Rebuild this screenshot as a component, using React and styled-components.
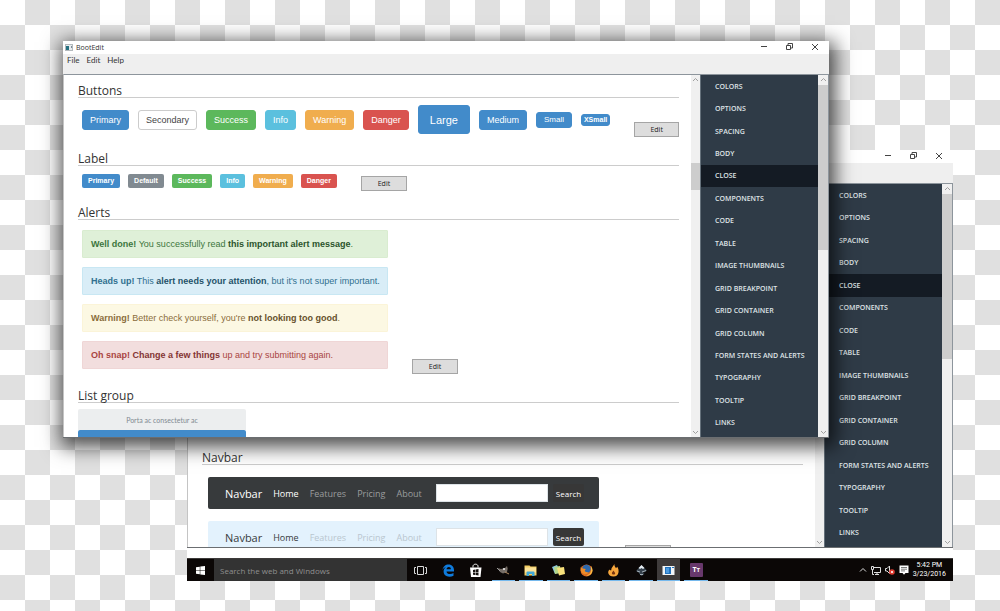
import styled, { createGlobalStyle } from 'styled-components'


const GlobalStyle = createGlobalStyle`
    *{
        box-sizing:border-box;
    }
    body{
        margin:0;
        font-family:"Open Sans", "Noto Sans", sans-serif;
        color:#333333;
    }
    button, input{
        font-family:inherit;
        margin:0;
    }
    a{
        text-decoration:none;
    }
`

const Desktop = styled.div`
    position:relative;
    min-height:100vh;
    padding:150px 47px 30px 187px;
    background:repeating-conic-gradient(#e0e0e0 0 25%, #ffffff 0 50%) 0 0 / 50px 50px;
`

const Screen = styled.div`
    display:flex;
    flex-direction:column;
    gap:10px;
    background-color:#ffffff;
`

const FrontPlace = styled.div`
    position:absolute;
    top:41px;
    left:63px;
    right:171px;
    box-shadow:2px 5px 18px 4px rgba(0,0,0,0.7);
`

const WindowFrame = styled.section`
    display:flex;
    flex-direction:column;
    height:${props => props.$tall ? "398px" : "397px"};
    background-color:#ffffff;
    border-bottom:1px solid #6b6e71;
`

const TitleBar = styled.header`
    display:flex;
    justify-content:space-between;
    align-items:center;
    height:13px;
    padding:0 9px 2px 2px;
`

const TitleName = styled.div`
    display:flex;
    align-items:center;
    gap:3px;
    padding-top:2px;
    font-size:7px;
    line-height:12px;
`

const TitleControls = styled.div`
    display:flex;
    gap:15px;
`

const TitleButton = styled.button`
    display:flex;
    padding:0;
    border:none;
    background:none;
    color:#444444;
`

const MenuBar = styled.div`
    display:flex;
    align-items:flex-start;
    gap:7px;
    height:20px;
    padding:0 4px;
    background-color:#efefef;
`

const MenuButton = styled.button`
    padding:0;
    border:none;
    background:none;
    color:#333333;
    font-family:Lato, sans-serif;
    font-size:8px;
    line-height:13px;
`

const WindowBody = styled.div`
    display:flex;
    flex:1;
    min-height:0;
    border:1px solid #8d959c;
    border-width:1px 1px 0 1px;
    border-left-color:#c4c4c4;
`

const Content = styled.main`
    flex:1;
    min-width:0;
    overflow:hidden;
    padding:${props => props.$low ? "264px 12px 0 14px" : "6px 12px 0 14px"};
`

const Heading = styled.h2`
    margin:0;
    padding-top:4px;
    border-bottom:1px solid #cccccc;
    font-size:12px;
    font-weight:400;
    line-height:12px;
    color:#333333;
`

const Example = styled.div`
    display:flex;
    align-items:flex-end;
    gap:${props => props.$gap || 24}px;
    padding:${props => props.$top}px 0 12px 4px;
`

const Group = styled.div`
    display:flex;
    align-items:center;
    gap:${props => props.$gap}px;
    padding-bottom:3px;
`

const EditButton = styled.button`
    width:46px;
    height:15px;
    padding:0;
    border:1px solid #a5a5a5;
    background-color:#dddddd;
    color:#222222;
    font-size:7px;
    line-height:13px;
`

const colors = {
    primary: "#428bca",
    default: "#818a91",
    success: "#5cb85c",
    info: "#5bc0de",
    warning: "#f0ad4e",
    danger: "#d9534f",
    secondary: "#ffffff",
}

const sizes = {
    large: { height: 29, padding: 11, font: 11, weight: 400 },
    medium: { height: 20, padding: 7, font: 9, weight: 400 },
    small: { height: 16, padding: 7, font: 8, weight: 400 },
    xsmall: { height: 12, padding: 2, font: 7, weight: 700 },
}

const BootButton = styled.button`
    height:${props => sizes[props.$size].height}px;
    padding:0 ${props => sizes[props.$size].padding}px;
    border:1px solid ${props => props.$kind === "secondary" ? "#cccccc" : colors[props.$kind]};
    border-radius:3px;
    background-color:${props => colors[props.$kind]};
    color:${props => props.$kind === "secondary" ? "#444444" : "#ffffff"};
    font-family:"Liberation Sans", Arial, sans-serif;
    font-size:${props => sizes[props.$size].font}px;
    font-weight:${props => sizes[props.$size].weight};
`

const Tag = styled.span`
    padding:0 6px;
    border-radius:2px;
    background-color:${props => colors[props.$kind]};
    color:#ffffff;
    font-family:"Liberation Sans", Arial, sans-serif;
    font-size:7px;
    font-weight:700;
    line-height:14px;
`

const AlertStack = styled.div`
    display:flex;
    flex-direction:column;
    gap:9px;
    width:306px;
    padding-bottom:5px;
`

const alertColors = {
    success: { back: "#dff0d8", line: "#d9ecd0", text: "#3c763d", strong: "#2b542c" },
    info: { back: "#d9edf7", line: "#c8e7f3", text: "#31708f", strong: "#245269" },
    warning: { back: "#fcf8e3", line: "#fbf4d8", text: "#8a6d3b", strong: "#66512c" },
    danger: { back: "#f2dede", line: "#efd6d6", text: "#a94442", strong: "#843534" },
}

const Alert = styled.div`
    padding:0 8px;
    border:1px solid ${props => alertColors[props.$kind].line};
    border-radius:1px;
    background-color:${props => alertColors[props.$kind].back};
    color:${props => alertColors[props.$kind].text};
    font-family:"Liberation Sans", Arial, sans-serif;
    font-size:9px;
    line-height:26px;
    white-space:nowrap;

    a{
        font-weight:700;
        color:${props => alertColors[props.$kind].strong};
    }
`

const ListGroup = styled.div`
    display:flex;
    flex-direction:column;
    width:168px;
    padding-top:6px;
`

const ListItem = styled.a`
    height:21px;
    border-radius:2px 2px 0 0;
    background-color:${props => props.$active ? "#428bca" : "#eceeef"};
    color:#818a91;
    font-family:Lato, sans-serif;
    font-size:7px;
    line-height:22px;
    text-align:center;
`

const NavStack = styled.div`
    display:flex;
    flex-direction:column;
    gap:12px;
    width:391px;
    margin-left:2px;
    padding-bottom:7px;
`

const Navbar = styled.nav`
    display:flex;
    align-items:center;
    gap:11px;
    height:32px;
    padding:0 15px 0 17px;
    border-radius:2px;
    background-color:${props => props.$dark ? "#373a3c" : "#e3f2fd"};
    color:${props => props.$dark ? "#ffffff" : "#373a3c"};
`

const NavBrand = styled.a`
    color:inherit;
    font-size:11px;
`

const NavLink = styled.a`
    color:${props => props.$active ? "inherit" : props.$dark ? "#9b9d9e" : "#b9c6cf"};
    font-size:9px;
`

const NavSearch = styled.form`
    display:flex;
    flex:1;
    gap:5px;
    min-width:0;
    margin-left:3px;
`

const NavInput = styled.input`
    flex:1;
    min-width:0;
    height:18px;
    padding:0 4px;
    border:1px solid #dde3e7;
    background-color:#ffffff;
    font-size:8px;
`

const NavSubmit = styled.button`
    width:31px;
    height:18px;
    padding:0;
    border:none;
    border-radius:2px;
    background-color:#373737;
    color:#ffffff;
    font-size:8px;
`

const ScrollTrack = styled.div`
    display:flex;
    flex-direction:column;
    align-items:center;
    width:${props => props.$wide ? "10px" : "9px"};
    background-color:#f0f0f0;
    color:#a0a0a0;
`

const ScrollThumb = styled.div`
    width:100%;
    height:${props => props.$height}px;
    margin:${props => props.$start}px 0 auto;
    background-color:#cdcdcd;
`

const SideNav = styled.nav`
    display:grid;
    grid-auto-rows:1fr;
    width:118px;
    padding-bottom:3px;
    border-left:1px solid #65717b;
    background-color:#2f3b47;
`

const SideLink = styled.a`
    display:flex;
    align-items:center;
    padding:0 14px;
    background-color:${props => props.$active ? "#141b24" : "transparent"};
    color:#dfe3e6;
    font-size:7px;
    font-weight:600;
    white-space:nowrap;
`

const Taskbar = styled.footer`
    display:flex;
    align-items:stretch;
    height:23px;
    border-top:1px solid #3c3a39;
    background-color:#0b0706;
`

const StartButton = styled.button`
    display:flex;
    align-items:center;
    justify-content:center;
    width:27px;
    padding:0;
    border:none;
    background:none;
`

const TaskSearch = styled.input`
    width:193px;
    padding:0 6px;
    border:none;
    background-color:#333333;
    color:#ffffff;
    font-size:8px;

    &::placeholder{
        color:#8f8f8f;
        opacity:1;
    }
`

const TaskList = styled.div`
    display:grid;
    grid-auto-flow:column;
    grid-auto-columns:1fr;
    width:303px;
`

const TaskButton = styled.button`
    display:flex;
    align-items:center;
    justify-content:center;
    margin:0 2px;
    padding:1px 0 0;
    border:none;
    border-bottom:1px solid ${props => props.$open ? "#76b9ed" : "transparent"};
    background-color:${props => props.$active ? "#3f3b3b" : "transparent"};
`

const Tray = styled.div`
    display:flex;
    align-items:center;
    gap:4px;
    margin-left:auto;
    padding-right:7px;
    color:#ffffff;
`

const Clock = styled.div`
    font-family:Roboto, sans-serif;
    font-size:7px;
    line-height:9px;
    text-align:center;
`

const TileMark = styled.span`
    width:13px;
    border-radius:1px;
    background-color:#68386c;
    color:#ffffff;
    font-size:7px;
    font-weight:700;
    line-height:13px;

    small{
        font-size:6px;
    }
`


function Chevron({ down }){
    return(
        <svg width="7" height="10" viewBox="0 0 7 10" fill="none" stroke="currentColor" style={{flexShrink:0}}>
            <path d={down ? "M1 4l2.5 2.5L6 4" : "M1 6l2.5-2.5L6 6"}/>
        </svg>
    )
}

function Scrollbar({ wide, start, height }){
    return(
        <ScrollTrack $wide={wide}>
            <Chevron/>
            <ScrollThumb $start={start} $height={height}/>
            <Chevron down/>
        </ScrollTrack>
    )
}

const sections = ["COLORS", "OPTIONS", "SPACING", "BODY", "CLOSE", "COMPONENTS", "CODE", "TABLE", "IMAGE THUMBNAILS", "GRID BREAKPOINT", "GRID CONTAINER", "GRID COLUMN", "FORM STATES AND ALERTS", "TYPOGRAPHY", "TOOLTIP", "LINKS"]

function AppWindow({ children, low, tall, named }){
    return(
        <WindowFrame $tall={tall}>
            <TitleBar>
                <TitleName>
                    {named && <svg width="8" height="7" viewBox="0 0 8 7">
                        <rect x=".5" y=".5" width="7" height="6" fill="#e8ecef" stroke="#b4babd"/>
                        <rect x="1" y="2" width="3" height="4" fill="#24707f"/>
                        <rect x="6" y="2" width="1" height="2" fill="#7c8b94"/>
                    </svg>}
                    {named && <span>BootEdit</span>}
                </TitleName>
                <TitleControls>
                    <TitleButton aria-label="Minimize">
                        <svg width="10" height="10" viewBox="0 0 10 10"><path d="M1 4.500h6" stroke="currentColor"/></svg>
                    </TitleButton>
                    <TitleButton aria-label="Restore">
                        <svg width="10" height="10" viewBox="0 0 10 10" fill="none" stroke="currentColor"><path d="M1.500 3.500h4v4h-4zM3 3V1.500h4.500V6H6"/></svg>
                    </TitleButton>
                    <TitleButton aria-label="Close">
                        <svg width="10" height="10" viewBox="0 0 10 10" stroke="currentColor"><path d="M2 2l6 6M8 2L2 8"/></svg>
                    </TitleButton>
                </TitleControls>
            </TitleBar>
            <MenuBar>
                {named && ["File", "Edit", "Help"].map(name => <MenuButton key={name}>{name}</MenuButton>)}
            </MenuBar>
            <WindowBody>
                <Content $low={low}>{children}</Content>
                <Scrollbar start={78} height={27}/>
                <SideNav>
                    {sections.map(name => <SideLink key={name} href="#" $active={name === "CLOSE"}>{name}</SideLink>)}
                </SideNav>
                <Scrollbar wide start={0} height={165}/>
            </WindowBody>
        </WindowFrame>
    )
}

function NavbarExample({ dark }){
    return(
        <Navbar $dark={dark}>
            <NavBrand href="#">Navbar</NavBrand>
            {["Home", "Features", "Pricing", "About"].map(name => <NavLink key={name} href="#" $dark={dark} $active={name === "Home"}>{name}</NavLink>)}
            <NavSearch>
                <NavInput type="text" aria-label="Search"/>
                <NavSubmit type="button">Search</NavSubmit>
            </NavSearch>
        </Navbar>
    )
}

const buttons = [
    ["Primary", "primary", "medium"],
    ["Secondary", "secondary", "medium"],
    ["Success", "success", "medium"],
    ["Info", "info", "medium"],
    ["Warning", "warning", "medium"],
    ["Danger", "danger", "medium"],
    ["Large", "primary", "large"],
    ["Medium", "primary", "medium"],
    ["Small", "primary", "small"],
    ["XSmall", "primary", "xsmall"],
]

const tags = ["Primary", "Default", "Success", "Info", "Warning", "Danger"]

const tasks = [
    { name: "Task View", icon: <g fill="none" stroke="#d8d8d8"><path d="M4.500 3.500h6v8h-6z"/><path d="M3 4.500H1.500v6H3M12 4.500h1.500v6H12"/></g> },
    { name: "Edge", icon: <path d="M1.500 7C2 3.500 4.500 1.500 7.500 1.500c3.600 0 5.500 2.500 5.500 5.500v1.500H5.500c.2 1.800 1.700 2.600 3.500 2.600 1.300 0 2.500-.4 3.500-1v2.600c-1.200.7-2.600 1-4.100 1C4.800 13.700 2.600 11.500 2.600 8.500c0-2 1-3.500 2.700-4.400C3.600 4.500 2.300 5.500 1.500 7zm4-.8h4.400c0-1.400-.8-2.300-2.100-2.300S5.600 4.900 5.500 6.200z" fill="#0f7bdc"/> },
    { name: "Store", icon: <g><path d="M5 4.500V3.200C5 2.200 6 1.200 7.500 1.200S10 2.200 10 3.200v1.300" fill="none" stroke="#fff"/><path d="M2 4.500h11.500l-1 9.500H3z" fill="#fff"/><path d="M5 7l2.200-.4v2.500H5zM7.700 6.500l2.800-.4v3H7.700zM5 9.600h2.200V12L5 11.700zM7.700 9.600h2.800v2.900l-2.800-.4z" fill="#161210"/></g> },
    { name: "GIMP", open: true, icon: <g><path d="M2 5l3 1 4-1 2-2 .7 2.500L11 9l-4 1.500L4 9z" fill="#766e67"/><circle cx="8" cy="6" r="1" fill="#eee"/><path d="M9 9l4 2" stroke="#b18a61"/><path d="M1 5l3 3" stroke="#999"/></g> },
    { name: "Files", open: true, icon: <g><path d="M1.500 2.500h5l1 1h6v9h-12z" fill="#f3cd63"/><path d="M2 4.500h11v5H2z" fill="#fbe39a"/><path d="M3.500 13V9.500q0-1 1-1h6q1 0 1 1V13H9v-2H6v2z" fill="#42a8d8"/></g> },
    { name: "Notes", open: true, icon: <g><path d="M1 4l5-2 3 6-5 3z" fill="#8bc9e4"/><path d="M3 4l6-1 1 7-6 1z" fill="#b4d68a"/><path d="M6 5l7-1 1 7-6 1.500z" fill="#f8e07b"/></g> },
    { name: "Firefox", open: true, icon: <g><circle cx="7.500" cy="7.500" r="6" fill="#dc6a20"/><circle cx="7.500" cy="6" r="4.200" fill="#2d69ad"/><path d="M1.800 4l2 1.500 3 .5-1 1.500c0 1.500 2 2 4 1.500-1 2-3 2.500-5 2C2.500 10 1 7 1.800 4z" fill="#ef8d29"/><path d="M12 3c2 3 2 6 0 8-1 1-3 2-5 1.500 3-.5 5-2.500 5-5z" fill="#f8be45"/></g> },
    { name: "Flame", open: true, icon: <g><path d="M8.500 1c-.5 2 .8 2.800 1.500 4.200l1.200-1.400C13.500 7 13.500 13.500 7.500 13.500 2 13.500 1 8.500 3.500 6.500c.5.800 1 1 1.800.8C5 5 6.500 4 8.500 1z" fill="#f7a63c"/><path d="M7.500 7.500l1.600 2.400c.6 1.800-3.200 2.200-3.200.3 0-1 1-1.500 1.600-2.700z" fill="#7a3410"/></g> },
    { name: "Inkscape", open: true, icon: <g><path d="M7.500 2l5.500 5.500-2 1.500-2 .5 1.500 1.500-3 2-2-2-1-1.500L2 8z" fill="#36414c"/><path d="M7.500 2l3 3-1.500 1-1.500-1L6 6 4.500 5z" fill="#e6edf2"/><path d="M3 8l3 1M8 9l4-1.500M6 11.500h3" stroke="#a4afb7" fill="none"/></g> },
    { name: "BootEdit", open: true, active: true, icon: <g><path d="M1.500 3h12v9h-12z" fill="#f1f4f7"/><path d="M4 4h6v7H4z" fill="#2272bd"/><path d="M5 5h3v5H5z" fill="#4d9be0"/><path d="M11 4h2v1h-2z" fill="#2272bd"/></g> },
]

function App(){
    return(
        <Desktop>
            <GlobalStyle/>
            <Screen>
                <AppWindow low tall>
                    <Heading>Navbar</Heading>
                    <Example $top={12} $gap={26}>
                        <NavStack>
                            <NavbarExample dark/>
                            <NavbarExample/>
                        </NavStack>
                        <EditButton aria-label="Edit navbar"/>
                    </Example>
                </AppWindow>
                <Taskbar>
                    <StartButton aria-label="Start">
                        <svg width="9" height="9" viewBox="0 0 9 9" fill="#ffffff"><path d="M0 1.300L3.800.7v3.500H0zM4.300.6L9 0v4.200H4.300zM0 4.800h3.800v3.500L0 7.700zM4.300 4.800H9V9l-4.700-.6z"/></svg>
                    </StartButton>
                    <TaskSearch type="text" aria-label="Search the web and Windows" placeholder="Search the web and Windows"/>
                    <TaskList>
                        {tasks.map(task => <TaskButton key={task.name} aria-label={task.name} $open={task.open} $active={task.active}>
                            <svg width="15" height="15" viewBox="0 0 15 15">{task.icon}</svg>
                        </TaskButton>)}
                        <TaskButton $open>
                            <TileMark>T<small>T</small></TileMark>
                        </TaskButton>
                    </TaskList>
                    <Tray>
                        <svg width="8" height="8" viewBox="0 0 8 8" fill="none" stroke="#dddddd"><path d="M1 5.500l3-3 3 3"/></svg>
                        <svg width="10" height="9" viewBox="0 0 10 9" fill="none" stroke="#dddddd"><path d="M3 1.500h6.500v5H3M6 7v1.500M4 8.500h4M.5.500h2v3h-2zM1.500 3.500v5H3"/></svg>
                        <svg width="10" height="10" viewBox="0 0 10 10" fill="none"><path d="M.5 3.500h1.500L4.500 1v7.500L2 6H.5z" stroke="#dddddd"/><circle cx="7" cy="7" r="2.800" fill="#e03c31"/><path d="M6 6l2 2M8 6L6 8" stroke="#ffffff" strokeWidth=".8"/></svg>
                        <svg width="10" height="10" viewBox="0 0 10 10"><path d="M.5.500h9V8H6.500L5 9.800 3.500 8h-3z" fill="#ffffff"/><path d="M2 2.500h6M2 4.200h6M2 5.900h4" stroke="#444444" strokeWidth=".7"/></svg>
                        <Clock>5:42 PM<br/>3/23/2016</Clock>
                    </Tray>
                </Taskbar>
            </Screen>
            <FrontPlace>
                <AppWindow named>
                    <Heading>Buttons</Heading>
                    <Example $top={7}>
                        <Group $gap={9}>
                            {buttons.map(([name, kind, size]) => <BootButton key={name} $kind={kind} $size={size}>{name}</BootButton>)}
                        </Group>
                        <EditButton>Edit</EditButton>
                    </Example>
                    <Heading>Label</Heading>
                    <Example $top={8}>
                        <Group $gap={8}>
                            {tags.map(name => <Tag key={name} $kind={name.toLowerCase()}>{name}</Tag>)}
                        </Group>
                        <EditButton>Edit</EditButton>
                    </Example>
                    <Heading>Alerts</Heading>
                    <Example $top={10}>
                        <AlertStack>
                            <Alert $kind="success"><strong>Well done!</strong> You successfully read <a href="#">this important alert message</a>.</Alert>
                            <Alert $kind="info"><strong>Heads up!</strong> This <a href="#">alert needs your attention</a>, but it's not super important.</Alert>
                            <Alert $kind="warning"><strong>Warning!</strong> Better check yourself, you're <a href="#">not looking too good</a>.</Alert>
                            <Alert $kind="danger"><strong>Oh snap!</strong> <a href="#">Change a few things</a> up and try submitting again.</Alert>
                        </AlertStack>
                        <EditButton>Edit</EditButton>
                    </Example>
                    <Heading>List group</Heading>
                    <ListGroup>
                        <ListItem href="#">Porta ac consectetur ac</ListItem>
                        <ListItem href="#" $active aria-label="Active item"/>
                    </ListGroup>
                </AppWindow>
            </FrontPlace>
        </Desktop>
    )
}

export default App
